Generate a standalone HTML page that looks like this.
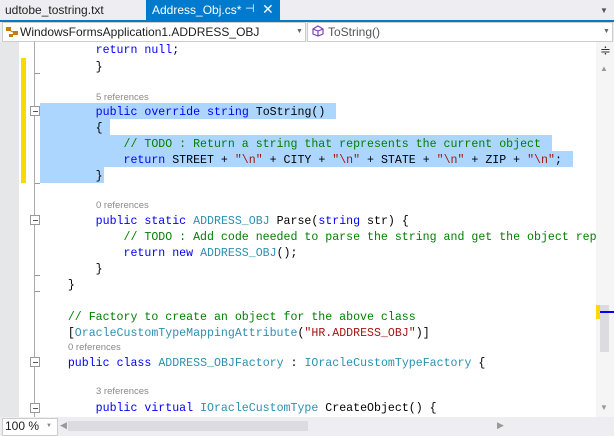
<!DOCTYPE html>
<html><head><meta charset="utf-8"><style>
body{margin:0;width:614px;height:436px;overflow:hidden;background:#fff;font-family:"Liberation Sans",sans-serif;position:relative}
.abs{position:absolute}
.code{position:absolute;left:40px;font-family:"Liberation Mono",monospace;font-size:11.6px;line-height:16px;white-space:pre;color:#000}
.ref{position:absolute;font-family:"Liberation Sans",sans-serif;font-size:9.5px;color:#8a8a8a;line-height:11px}
.k{color:#0000ff}.t{color:#2b91af}.c{color:#008000}.s{color:#a31515}
.sel{position:absolute;background:#add6ff;height:16px;left:40px}
.box{position:absolute;left:30px;width:8px;height:8px;border:1px solid #999;background:#fff}
.box:after{content:"";position:absolute;left:2px;top:4px;width:5px;height:1px;background:#555}
.tick{position:absolute;left:35px;width:5px;height:1px;background:#999}
</style></head><body>
<div class="abs" style="left:0;top:0;width:614px;height:20px;background:#eeeef2"></div>
<div class="abs" style="left:5px;top:3px;font-size:12px;color:#1e1e1e">udtobe_tostring.txt</div>
<div class="abs" style="left:146px;top:0;width:134px;height:20px;background:#007acc"></div>
<div class="abs" style="left:152px;top:3px;font-size:12px;color:#fff">Address_Obj.cs*</div>
<div class="abs" style="left:245px;top:2px;font-size:11px;color:#fff">⊣</div>
<div class="abs" style="left:262px;top:1px;font-size:14px;color:#fff">✕</div>
<div class="abs" style="left:600px;top:6px;font-size:8px;color:#555">▼</div>
<div class="abs" style="left:0;top:20px;width:614px;height:2px;background:#007acc"></div>
<div class="abs" style="left:0;top:22px;width:614px;height:20px;background:#eeeef2"></div>
<div class="abs" style="left:2px;top:22px;width:302px;height:18px;background:#fff;border:1px solid #ccc"></div>
<div class="abs" style="left:307px;top:22px;width:304px;height:18px;background:#fff;border:1px solid #ccc"></div>
<svg class="abs" style="left:5px;top:25px" width="16" height="14"><rect x="1" y="2" width="5" height="4" fill="#c27d0e"/><rect x="8" y="6" width="5" height="4" fill="#c27d0e"/><rect x="4" y="9" width="4" height="3" fill="#c27d0e"/><path d="M4 5 L10 8" stroke="#c27d0e"/></svg>
<div class="abs" style="left:20px;top:25px;font-size:12px;color:#1e1e1e">WindowsFormsApplication1.ADDRESS_OBJ</div>
<div class="abs" style="left:296px;top:28px;font-size:7px;color:#666">▼</div>
<svg class="abs" style="left:312px;top:25px" width="12" height="12"><path d="M6 1 L11 4 L11 9 L6 11 L1 9 L1 4 Z M1 4 L6 6 L11 4 M6 6 L6 11" fill="none" stroke="#7a43b6" stroke-width="1.2"/></svg>
<div class="abs" style="left:328px;top:25px;font-size:12px;color:#555">ToString()</div>
<div class="abs" style="left:603px;top:28px;font-size:7px;color:#666">▼</div>
<div class="abs" style="left:0;top:42px;width:19px;height:375px;background:#e6e7e8"></div>
<div class="abs" style="left:21px;top:58px;width:5px;height:125px;background:#ffd800"></div>
<div class="abs" style="left:34px;top:42px;width:1px;height:375px;background:#aaa"></div>
<div class="tick" style="top:73px"></div>
<div class="tick" style="top:183px"></div>
<div class="tick" style="top:275px"></div>
<div class="tick" style="top:291px"></div>
<div class="box" style="top:106px"></div>
<div class="box" style="top:215px"></div>
<div class="box" style="top:357px"></div>
<div class="box" style="top:403px"></div>
<div class="sel" style="top:103px;width:296px"></div>
<div class="sel" style="top:119px;width:70px"></div>
<div class="sel" style="top:135px;width:512px"></div>
<div class="sel" style="top:151px;width:533px"></div>
<div class="sel" style="top:167px;width:64px"></div>
<div class="abs" style="left:0;top:42px;width:596px;height:375px;overflow:hidden">
<div class="code" style="top:1px">        <span class="k">return</span> <span class="k">null</span>;</div>
<div class="code" style="top:18px">        }</div>
<div class="ref" style="left:96px;top:50px">5 references</div>
<div class="code" style="top:63px">        <span class="k">public</span> <span class="k">override</span> <span class="k">string</span> ToString()</div>
<div class="code" style="top:79px">        {</div>
<div class="code" style="top:95px">            <span class="c">// TODO : Return a string that represents the current object</span></div>
<div class="code" style="top:111px">            <span class="k">return</span> STREET + <span class="s">"\n"</span> + CITY + <span class="s">"\n"</span> + STATE + <span class="s">"\n"</span> + ZIP + <span class="s">"\n"</span>;</div>
<div class="code" style="top:127px">        }</div>
<div class="ref" style="left:96px;top:158px">0 references</div>
<div class="code" style="top:172px">        <span class="k">public</span> <span class="k">static</span> <span class="t">ADDRESS_OBJ</span> Parse(<span class="k">string</span> str) {</div>
<div class="code" style="top:188px">            <span class="c">// TODO : Add code needed to parse the string and get the object representation</span></div>
<div class="code" style="top:204px">            <span class="k">return</span> <span class="k">new</span> <span class="t">ADDRESS_OBJ</span>();</div>
<div class="code" style="top:220px">        }</div>
<div class="code" style="top:236px">    }</div>
<div class="code" style="top:268px">    <span class="c">// Factory to create an object for the above class</span></div>
<div class="code" style="top:284px">    [<span class="t">OracleCustomTypeMappingAttribute</span>(<span class="s">"HR.ADDRESS_OBJ"</span>)]</div>
<div class="ref" style="left:68px;top:300px">0 references</div>
<div class="code" style="top:314px">    <span class="k">public</span> <span class="k">class</span> <span class="t">ADDRESS_OBJFactory</span> : <span class="t">IOracleCustomTypeFactory</span> {</div>
<div class="ref" style="left:96px;top:344px">3 references</div>
<div class="code" style="top:359px">        <span class="k">public</span> <span class="k">virtual</span> <span class="t">IOracleCustomType</span> CreateObject() {</div>
</div>
<div class="abs" style="left:596px;top:42px;width:18px;height:375px;background:#f5f5f5"></div>
<div class="abs" style="left:600px;top:44px;font-size:13px;color:#333;line-height:14px">≑</div>
<div class="abs" style="left:600px;top:64px;font-size:8px;color:#999">▲</div>
<div class="abs" style="left:600px;top:305px;width:9px;height:47px;background:#dcdce0"></div>
<div class="abs" style="left:596px;top:311px;width:18px;height:2px;background:#0000ff"></div>
<div class="abs" style="left:596px;top:305px;width:4px;height:14px;background:#ffd800"></div>
<div class="abs" style="left:600px;top:403px;font-size:8px;color:#999">▼</div>
<div class="abs" style="left:0;top:417px;width:614px;height:19px;background:#eeeef2"></div>
<div class="abs" style="left:2px;top:418px;width:54px;height:16px;background:#fff;border:1px solid #ccc"></div>
<div class="abs" style="left:5px;top:419px;font-size:12px;color:#1e1e1e">100 %</div>
<div class="abs" style="left:46px;top:423px;font-size:6px;color:#888">▼</div>
<div class="abs" style="left:60px;top:420px;font-size:9px;color:#999">◀</div>
<div class="abs" style="left:68px;top:421px;width:240px;height:10px;background:#dcdce0"></div>
<div class="abs" style="left:497px;top:420px;font-size:9px;color:#999">▶</div>
</body></html>
